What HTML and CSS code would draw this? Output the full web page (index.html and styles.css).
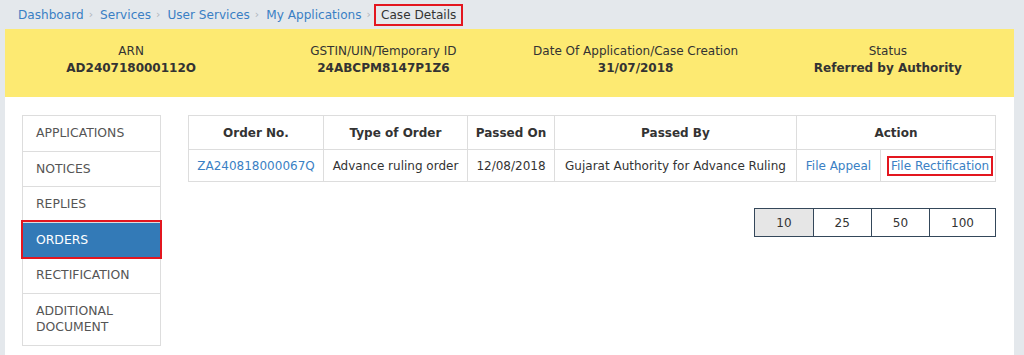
FILE: index.html
```html
<!DOCTYPE html>
<html>
<head>
  <title>Case Details</title>
  <link rel="stylesheet" href="styles.css">
</head>
<body>
  <div class="page">
    <div class="breadcrumb">
      <a href="#">Dashboard</a><span class="sep">&rsaquo;</span>
      <a href="#">Services</a><span class="sep">&rsaquo;</span>
      <a href="#">User Services</a><span class="sep">&rsaquo;</span>
      <a href="#">My Applications</a><span class="sep">&rsaquo;</span>
      <span class="current highlight">Case Details</span>
    </div>

    <div class="case-header">
      <div class="case-field">
        <div class="case-label">ARN</div>
        <div class="case-value">AD240718000112O</div>
      </div>
      <div class="case-field">
        <div class="case-label">GSTIN/UIN/Temporary ID</div>
        <div class="case-value">24ABCPM8147P1Z6</div>
      </div>
      <div class="case-field">
        <div class="case-label">Date Of Application/Case Creation</div>
        <div class="case-value">31/07/2018</div>
      </div>
      <div class="case-field">
        <div class="case-label">Status</div>
        <div class="case-value">Referred by Authority</div>
      </div>
    </div>

    <div class="panel">
      <ul class="side-nav">
        <li><a href="#">APPLICATIONS</a></li>
        <li><a href="#">NOTICES</a></li>
        <li><a href="#">REPLIES</a></li>
        <li class="active"><a href="#">ORDERS</a></li>
        <li><a href="#">RECTIFICATION</a></li>
        <li><a href="#">ADDITIONAL DOCUMENT</a></li>
      </ul>

      <div class="content">
        <table class="orders">
          <colgroup>
            <col style="width: 135px">
            <col style="width: 144px">
            <col style="width: 87px">
            <col style="width: 242px">
            <col style="width: 84px">
            <col style="width: 115px">
          </colgroup>
          <thead>
            <tr>
              <th>Order No.</th>
              <th>Type of Order</th>
              <th>Passed On</th>
              <th>Passed By</th>
              <th colspan="2">Action</th>
            </tr>
          </thead>
          <tbody>
            <tr>
              <td><a href="#">ZA240818000067Q</a></td>
              <td>Advance ruling order</td>
              <td>12/08/2018</td>
              <td>Gujarat Authority for Advance Ruling</td>
              <td><a href="#">File Appeal</a></td>
              <td><a href="#" class="highlight">File Rectification</a></td>
            </tr>
          </tbody>
        </table>

        <div class="pager">
          <button class="pager-btn selected">10</button>
          <button class="pager-btn">25</button>
          <button class="pager-btn">50</button>
          <button class="pager-btn">100</button>
        </div>
      </div>
    </div>
  </div>
</body>
</html>
```

FILE: styles.css
```css
body {
  margin: 0;
  background-color: #e4e8ec;
  font-family: "DejaVu Sans", Verdana, sans-serif;
  font-size: 12px;
  color: #333333;
}

a {
  color: #3a7fc4;
  text-decoration: none;
}

.page {
  margin: 0 10px 0 5px;
  height: 355px;
  overflow: hidden;
}

.breadcrumb {
  height: 29px;
  padding-left: 13px;
  display: flex;
  align-items: center;
  font-size: 12.1px;
}

.breadcrumb .sep {
  color: #b0b6bc;
  font-size: 11px;
  padding: 0 7px 0 5px;
}

.breadcrumb .current {
  color: #333333;
  margin-left: -4px;
}

.highlight {
  border: 2px solid #e3161f;
  padding: 2px 5px;
}

.case-header {
  display: grid;
  grid-template-columns: repeat(4, 1fr);
  background-color: #fdea72;
  height: 68px;
  padding-top: 14px;
  box-sizing: border-box;
  text-align: center;
}

.case-label {
  line-height: 17px;
}

.case-value {
  font-weight: bold;
  line-height: 17px;
}

.panel {
  background-color: #ffffff;
  display: flex;
  align-items: flex-start;
  padding: 18px 18px 18px 17px;
  height: 258px;
  box-sizing: border-box;
}

.side-nav {
  list-style: none;
  margin: 0;
  padding: 0;
  width: 140px;
  border: 1px solid #dddddd;
  box-sizing: border-box;
}

.side-nav li {
  border-top: 1px solid #dddddd;
}

.side-nav li:first-child {
  border-top: none;
}

.side-nav a {
  display: block;
  padding: 9px 13px;
  line-height: 16.5px;
  font-size: 12.4px;
  color: #555555;
}

.side-nav li.active {
  position: relative;
  outline: 2px solid #e3161f;
  background-color: #337ab7;
}

.side-nav li.active a {
  color: #ffffff;
}

.content {
  margin-left: 27px;
  flex: 1;
}

.orders {
  border-collapse: collapse;
  width: 100%;
  table-layout: fixed;
}

.orders th,
.orders td {
  border: 1px solid #dddddd;
  padding: 0 6px;
  text-align: center;
  white-space: nowrap;
}

.orders th {
  height: 33px;
  font-weight: bold;
  color: #333333;
}

.orders td {
  height: 31px;
}

.orders .highlight {
  padding: 1px 2px;
}

.pager {
  display: flex;
  justify-content: flex-end;
  margin-top: 26px;
}

.pager-btn {
  font-family: "DejaVu Sans", Verdana, sans-serif;
  font-size: 12px;
  color: #333333;
  background-color: #ffffff;
  border: 1px solid #34475a;
  border-left: none;
  height: 29px;
  padding: 0 21px;
}

.pager-btn:first-child {
  border-left: 1px solid #34475a;
}

.pager-btn.selected {
  background-color: #e6e6e6;
}
```
